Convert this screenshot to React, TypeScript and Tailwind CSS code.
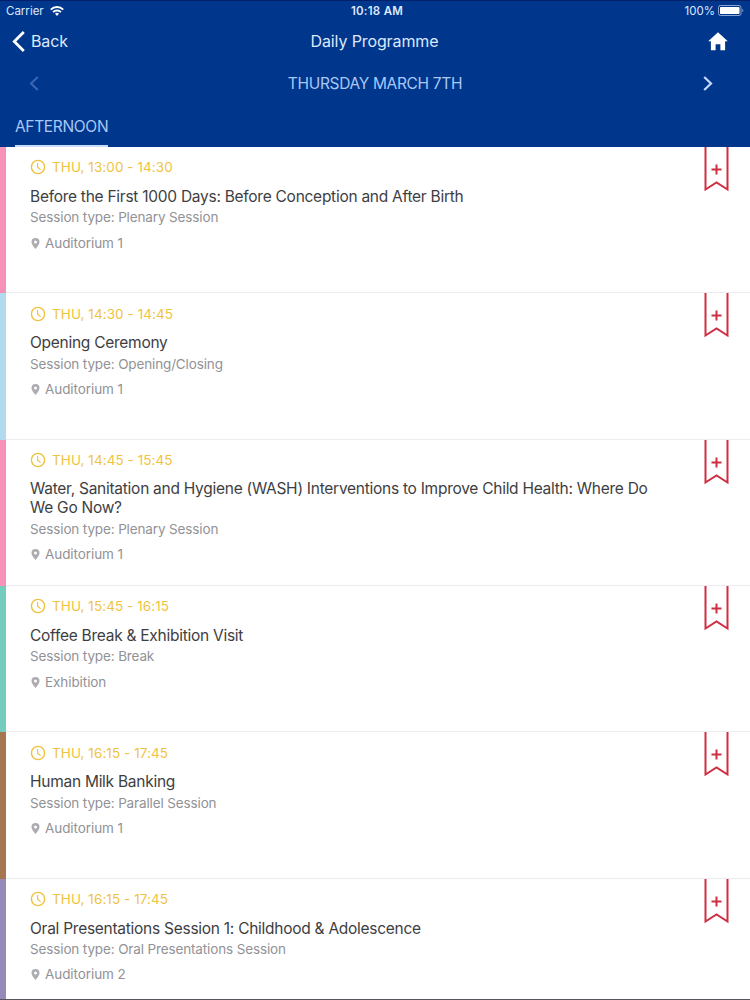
type Session = {
  time: string;
  title: string;
  type: string;
  place: string;
  bar: string;
};

const sessions: Session[] = [
  { time: "THU, 13:00 - 14:30", title: "Before the First 1000 Days: Before Conception and After Birth", type: "Plenary Session", place: "Auditorium 1", bar: "bg-[#f691b8]" },
  { time: "THU, 14:30 - 14:45", title: "Opening Ceremony", type: "Opening/Closing", place: "Auditorium 1", bar: "bg-[#b3d9ef]" },
  { time: "THU, 14:45 - 15:45", title: "Water, Sanitation and Hygiene (WASH) Interventions to Improve Child Health: Where Do We Go Now?", type: "Plenary Session", place: "Auditorium 1", bar: "bg-[#f691b8]" },
  { time: "THU, 15:45 - 16:15", title: "Coffee Break & Exhibition Visit", type: "Break", place: "Exhibition", bar: "bg-[#74ccbc]" },
  { time: "THU, 16:15 - 17:45", title: "Human Milk Banking", type: "Parallel Session", place: "Auditorium 1", bar: "bg-[#a67650]" },
  { time: "THU, 16:15 - 17:45", title: "Oral Presentations Session 1: Childhood & Adolescence", type: "Oral Presentations Session", place: "Auditorium 2", bar: "bg-[#9688b8]" },
];

function Wifi() {
  return (
    <svg className="ml-[6px] h-[10px] w-[14px]" viewBox="0 0 14 10" fill="none" stroke="#fff">
      <path d="M.8 3.6a8.8 8.8 0 0 1 12.4 0" strokeWidth="2" />
      <path d="M3.1 6.1a5.5 5.5 0 0 1 7.8 0" strokeWidth="1.9" />
      <path d="M7 9.9 5 7.8a2.9 2.9 0 0 1 4 0z" fill="#fff" stroke="none" />
    </svg>
  );
}

function Row({ s }: { s: Session }) {
  return (
    <li className="flex h-[146.35px] shrink-0">
      <div className={"w-[6px] shrink-0 " + s.bar} />
      <div className="flex flex-1 items-start border-b border-[#ececf0] pl-6">
        <div className="w-[630px] pt-[10.4px]">
          <div className="flex h-5 items-center text-[13.5px] tracking-[0.07px] text-[#efc33f]">
            <svg className="mr-[6px] h-4 w-4" viewBox="0 0 16 16" fill="none" stroke="currentColor" strokeWidth="1.4">
              <circle cx="8" cy="8" r="6.6" />
              <path d="M7.6 4v4.2l3 2.4" strokeWidth="1.2" />
            </svg>
            {s.time}
          </div>
          <h2 className="mt-[9.4px] text-[15.5px] leading-[19px] tracking-[-0.265px] text-[#3e3e42]">{s.title}</h2>
          <p className="mt-[1.6px] text-[13.5px] leading-5 tracking-[-0.135px] text-[#929296]">Session type: {s.type}</p>
          <p className="mt-[5.4px] flex h-5 items-center text-[13.5px] tracking-[-0.08px] text-[#929296]">
            <svg className="mt-px mr-[5px] ml-px h-[11px] w-[9px]" viewBox="0 0 9 11">
              <path fill="#adadb1" fillRule="evenodd" d="M4.5 0A4 4 0 0 0 .5 4c0 2.8 4 7 4 7s4-4.2 4-7a4 4 0 0 0-4-4zm0 2.5a1.5 1.5 0 1 1 0 3 1.5 1.5 0 0 1 0-3z" />
            </svg>
            {s.place}
          </p>
        </div>
        <svg className="mr-[21px] ml-auto h-[45px] w-[25px]" viewBox="0 0 25 45" fill="none" stroke="#cf2f42" strokeWidth="2">
          <path d="M1.5 0v42.5L12.5 35.5l11 7V0" />
          <path d="M7.5 22.5h10M12.5 17.5v10" />
        </svg>
      </div>
    </li>
  );
}

export default function App() {
  return (
    <div className="flex h-[1000px] w-[750px] flex-col overflow-hidden bg-white font-['Inter','Liberation_Sans',sans-serif]">
      <header className="flex h-[147px] shrink-0 flex-col border-t border-[#04206b] bg-[#00368c] text-[#dce9ff]">
        <div className="grid h-5 grid-cols-3 items-center pr-[6px] pl-[6px] text-[11.5px]">
          <div className="flex items-center"><span className="pt-px">Carrier</span><Wifi /></div>
          <div className="pt-px pl-1 text-center font-semibold tracking-[0.25px]">10:18 AM</div>
          <div className="flex items-center justify-end">
            <span className="pt-px">100%</span>
            <svg className="mb-px ml-[3px] h-[11px] w-[26px]" viewBox="0 0 26 11">
              <rect x=".5" y=".5" width="22.5" height="10" rx="2" fill="none" stroke="#8ba5d2" />
              <rect x="2" y="2" width="19.5" height="7" rx=".8" fill="#fff" />
              <path d="M24.3 3.8v3.4c1.4-.4 1.4-3 0-3.4z" fill="#8ba5d2" />
            </svg>
          </div>
        </div>
        <div className="grid h-[41px] grid-cols-3 items-center pr-[22px] pl-3 text-[16px] tracking-[-0.12px]">
          <div className="flex items-center">
            <svg className="mr-[6px] h-[21px] w-[13px]" viewBox="0 0 13 21" fill="none" stroke="#fff" strokeWidth="2.8">
              <path d="M11.8 1 2.3 10.5l9.5 9.5" />
            </svg>
            <span className="pb-px">Back</span>
          </div>
          <div className="pb-px pl-[9px] text-center whitespace-nowrap">Daily Programme</div>
          <svg className="h-[19px] w-[20px] justify-self-end" viewBox="0 0 20 19" fill="#fff">
            <path d="M10 .3 19.8 9.2h-2.7V18.3h-4.7v-6H7.6v6H2.9V9.2H.2z" />
          </svg>
        </div>
        <div className="flex h-[42px] items-center justify-between pr-[37px] pl-[29px] text-[#a9c8f6]">
          <svg className="h-[15px] w-[10px]" viewBox="0 0 10 15" fill="none" stroke="#3c67b3" strokeWidth="2">
            <path d="M8.8 1 2 7.5 8.8 14" />
          </svg>
          <div className="pt-[2px] pl-[8px] text-[15.5px] tracking-[-0.33px]">THURSDAY MARCH 7TH</div>
          <svg className="h-[15px] w-[10px]" viewBox="0 0 10 15" fill="none" stroke="#c5dbff" strokeWidth="2.2">
            <path d="M1.2 1 8 7.5 1.2 14" />
          </svg>
        </div>
        <div className="flex flex-1 pl-[15px] text-[15.5px] tracking-[-0.33px] text-[#a9c8f6]">
          <div className="flex w-[93px] items-end border-b-2 border-[#c8dcfa] pb-[7px] whitespace-nowrap">AFTERNOON</div>
        </div>
      </header>
      <ul className="flex flex-1 flex-col overflow-hidden">
        {sessions.map((s, i) => <Row key={i} s={s} />)}
      </ul>
      <div className="h-px shrink-0 bg-[#55535c]" />
    </div>
  );
}
